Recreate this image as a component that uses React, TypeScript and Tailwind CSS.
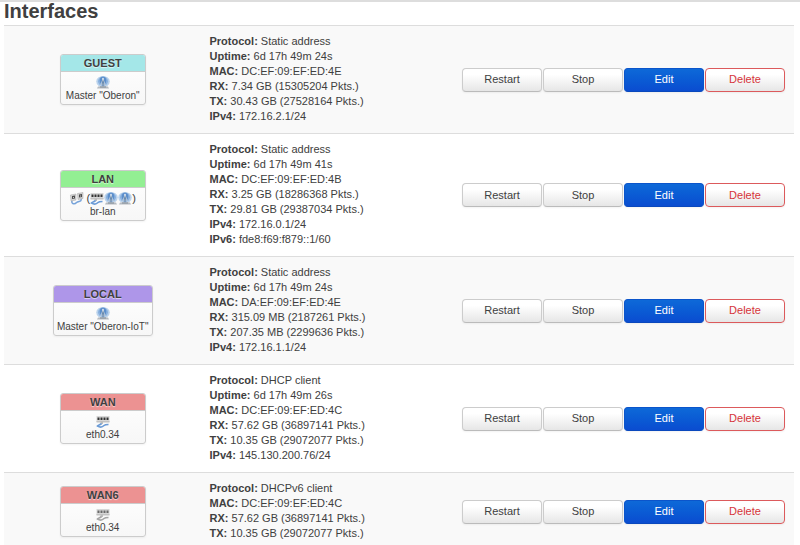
import React from 'react';
import { clsx } from 'clsx';

type IconKind = 'wifi' | 'switch' | 'bridge';

interface Iface {
  name: string;
  color: string;
  device: string;
  icons: IconKind[];
  members?: IconKind[];
  inactive?: boolean;
  details: [string, string][];
}

const interfaces: Iface[] = [
  {
    name: 'GUEST',
    color: 'bg-[#a4e7e8]',
    device: 'Master "Oberon"',
    icons: ['wifi'],
    details: [
      ['Protocol', 'Static address'],
      ['Uptime', '6d 17h 49m 24s'],
      ['MAC', 'DC:EF:09:EF:ED:4E'],
      ['RX', '7.34 GB (15305204 Pkts.)'],
      ['TX', '30.43 GB (27528164 Pkts.)'],
      ['IPv4', '172.16.2.1/24'],
    ],
  },
  {
    name: 'LAN',
    color: 'bg-[#93ef93]',
    device: 'br-lan',
    icons: ['bridge'],
    members: ['switch', 'wifi', 'wifi'],
    details: [
      ['Protocol', 'Static address'],
      ['Uptime', '6d 17h 49m 41s'],
      ['MAC', 'DC:EF:09:EF:ED:4B'],
      ['RX', '3.25 GB (18286368 Pkts.)'],
      ['TX', '29.81 GB (29387034 Pkts.)'],
      ['IPv4', '172.16.0.1/24'],
      ['IPv6', 'fde8:f69:f879::1/60'],
    ],
  },
  {
    name: 'LOCAL',
    color: 'bg-[#ae96e9]',
    device: 'Master "Oberon-IoT"',
    icons: ['wifi'],
    details: [
      ['Protocol', 'Static address'],
      ['Uptime', '6d 17h 49m 24s'],
      ['MAC', 'DA:EF:09:EF:ED:4E'],
      ['RX', '315.09 MB (2187261 Pkts.)'],
      ['TX', '207.35 MB (2299636 Pkts.)'],
      ['IPv4', '172.16.1.1/24'],
    ],
  },
  {
    name: 'WAN',
    color: 'bg-[#ec9292]',
    device: 'eth0.34',
    icons: ['switch'],
    details: [
      ['Protocol', 'DHCP client'],
      ['Uptime', '6d 17h 49m 26s'],
      ['MAC', 'DC:EF:09:EF:ED:4C'],
      ['RX', '57.62 GB (36897141 Pkts.)'],
      ['TX', '10.35 GB (29072077 Pkts.)'],
      ['IPv4', '145.130.200.76/24'],
    ],
  },
  {
    name: 'WAN6',
    color: 'bg-[#ec9292]',
    device: 'eth0.34',
    icons: ['switch'],
    inactive: true,
    details: [
      ['Protocol', 'DHCPv6 client'],
      ['MAC', 'DC:EF:09:EF:ED:4C'],
      ['RX', '57.62 GB (36897141 Pkts.)'],
      ['TX', '10.35 GB (29072077 Pkts.)'],
    ],
  },
];

function WifiIcon() {
  return (
    <svg viewBox="0 0 28 26" className="h-[13px] w-3.5" aria-hidden="true">
      <ellipse cx="14" cy="11" rx="13.5" ry="11" fill="#b9d2ec" />
      <ellipse cx="14" cy="10.5" rx="10" ry="9.5" fill="#8ab1de" />
      <ellipse cx="14" cy="9" rx="6.5" ry="7.5" fill="#5b8ecb" />
      <path d="M14 6 L8 22 M14 6 L20 22 M11 16 H17" stroke="#c3cfdb" strokeWidth="1.8" fill="none" />
      <path d="M14 9 V21" stroke="#66788c" strokeWidth="1.6" />
      <circle cx="14" cy="5.5" r="1.8" fill="#dfe7ef" />
      <path d="M4 21 H24 L26 25 H2 Z" fill="#b5bac0" />
      <path d="M8 21 H20 V23 H8 Z" fill="#858f99" />
    </svg>
  );
}

function SwitchIcon({ inactive = false }: { inactive?: boolean }) {
  const cable = inactive ? '#a5a5a5' : '#6b9bd6';
  const port = inactive ? '#6a6a6a' : '#333333';
  return (
    <svg viewBox="0 0 28 26" className="h-[13px] w-3.5" aria-hidden="true">
      <path d="M1 2 H27 V14 H1 Z" fill="#d6d6d6" />
      <path d="M1 12 H27 V15 H1 Z" fill="#c2c2c2" />
      <path d="M3 5 H7 V10 H3 Z M9 5 H13 V10 H9 Z M15 5 H19 V10 H15 Z M21 5 H25 V10 H21 Z" fill={port} />
      <path d="M9 13 H14 V18 H9 Z" fill="#bcbcbc" />
      <path d="M11 17 C9 20 4 20 3 22 C8 25 13 24 16 21 C18 19 21 19 25 19" stroke={cable} strokeWidth="3.4" fill="none" />
    </svg>
  );
}

function BridgeIcon() {
  return (
    <svg viewBox="0 0 28 26" className="h-[13px] w-3.5" aria-hidden="true">
      <path d="M4 17 C2 25 10 25 13 21 C17 17 24 21 22 12" stroke="#78a4da" strokeWidth="3" fill="none" />
      <path d="M1 6 L12 4 V16 L2 18 Z" fill="#d2d2d2" stroke="#a5a5a5" />
      <path d="M15 3 L26 1 V13 L16 15 Z" fill="#d2d2d2" stroke="#a5a5a5" />
      <path d="M4 8 L10 7 V13 L4 14 Z M18 5 L24 4 V10 L18 11 Z" fill="#4c4c4c" />
      <path d="M6 10 H8 V12 H6 Z M20 7 H22 V9 H20 Z" fill="#c8c8c8" />
    </svg>
  );
}

function DeviceIcon({ kind, inactive }: { kind: IconKind; inactive?: boolean }) {
  if (kind === 'wifi') return <WifiIcon />;
  if (kind === 'bridge') return <BridgeIcon />;
  return <SwitchIcon inactive={inactive} />;
}

function Badge({ iface }: { iface: Iface }) {
  return (
    <div className="min-w-[86px] overflow-hidden rounded-[3px] border border-[#cccccc] bg-linear-to-b from-white to-[#f7f7f7] text-center shadow-xs">
      <div className={clsx('border-b border-[#cccccc] font-bold leading-4 text-shadow-[0_1px_1px_#ffffffa0]', iface.color)}>
        {iface.name}
      </div>
      <div className="px-[3px] pt-1 pb-px">
        <div className="flex h-[13px] items-center justify-center">
          {iface.icons.map((kind, i) => (
            <DeviceIcon key={i} kind={kind} inactive={iface.inactive} />
          ))}
          {iface.members && (
            <span className="ml-[3px] flex items-center">
              (
              {iface.members.map((kind, i) => (
                <DeviceIcon key={i} kind={kind} />
              ))}
              )
            </span>
          )}
        </div>
        <div className="text-[10px] leading-[14px]">{iface.device}</div>
      </div>
    </div>
  );
}

const buttonStyles = {
  neutral: 'border-[#cccccc] border-b-[#bbbbbb] bg-linear-to-b from-white from-25% to-[#e6e6e6] text-[#404040]',
  primary: 'border-[#0b55cb] border-b-[#0a48bd] bg-linear-to-b from-[#0e69d8] to-[#0b4cd0] text-white',
  danger: 'border-[#dc5a5c] bg-linear-to-b from-white from-25% to-[#e6e6e6] text-[#d63439]',
};

function Button({ tone = 'neutral', children }: { tone?: keyof typeof buttonStyles; children: React.ReactNode }) {
  return (
    <button
      type="button"
      className={clsx('h-6 w-20 rounded-[4px] border pb-px text-[11px] leading-4 shadow-xs', buttonStyles[tone])}
    >
      {children}
    </button>
  );
}

export default function App() {
  return (
    <main className="border-t-2 border-[#dddddd] bg-white pr-1.5 pl-1 font-['Liberation_Sans',Arial,sans-serif] text-[11px] leading-[15px] text-[#404040]">
      <h1 className="pb-[5px] text-xl leading-[18px] font-bold">Interfaces</h1>
      <table className="w-full border-collapse">
        <tbody>
          {interfaces.map((iface) => (
            <tr key={iface.name} className="border-t border-[#dddddd] odd:bg-[#f9f9f9]">
              <td className="w-1/4 align-middle">
                <div className="flex justify-center">
                  <Badge iface={iface} />
                </div>
              </td>
              <td className="pt-2 pb-[9px] pl-2 align-middle">
                {iface.details.map(([label, value]) => (
                  <div key={label}>
                    <strong>{label}:</strong> {value}
                  </div>
                ))}
              </td>
              <td className="pr-[9px] align-middle">
                <div className="flex justify-end gap-px">
                  <Button>Restart</Button>
                  <Button>Stop</Button>
                  <Button tone="primary">Edit</Button>
                  <Button tone="danger">Delete</Button>
                </div>
              </td>
            </tr>
          ))}
        </tbody>
      </table>
    </main>
  );
}
